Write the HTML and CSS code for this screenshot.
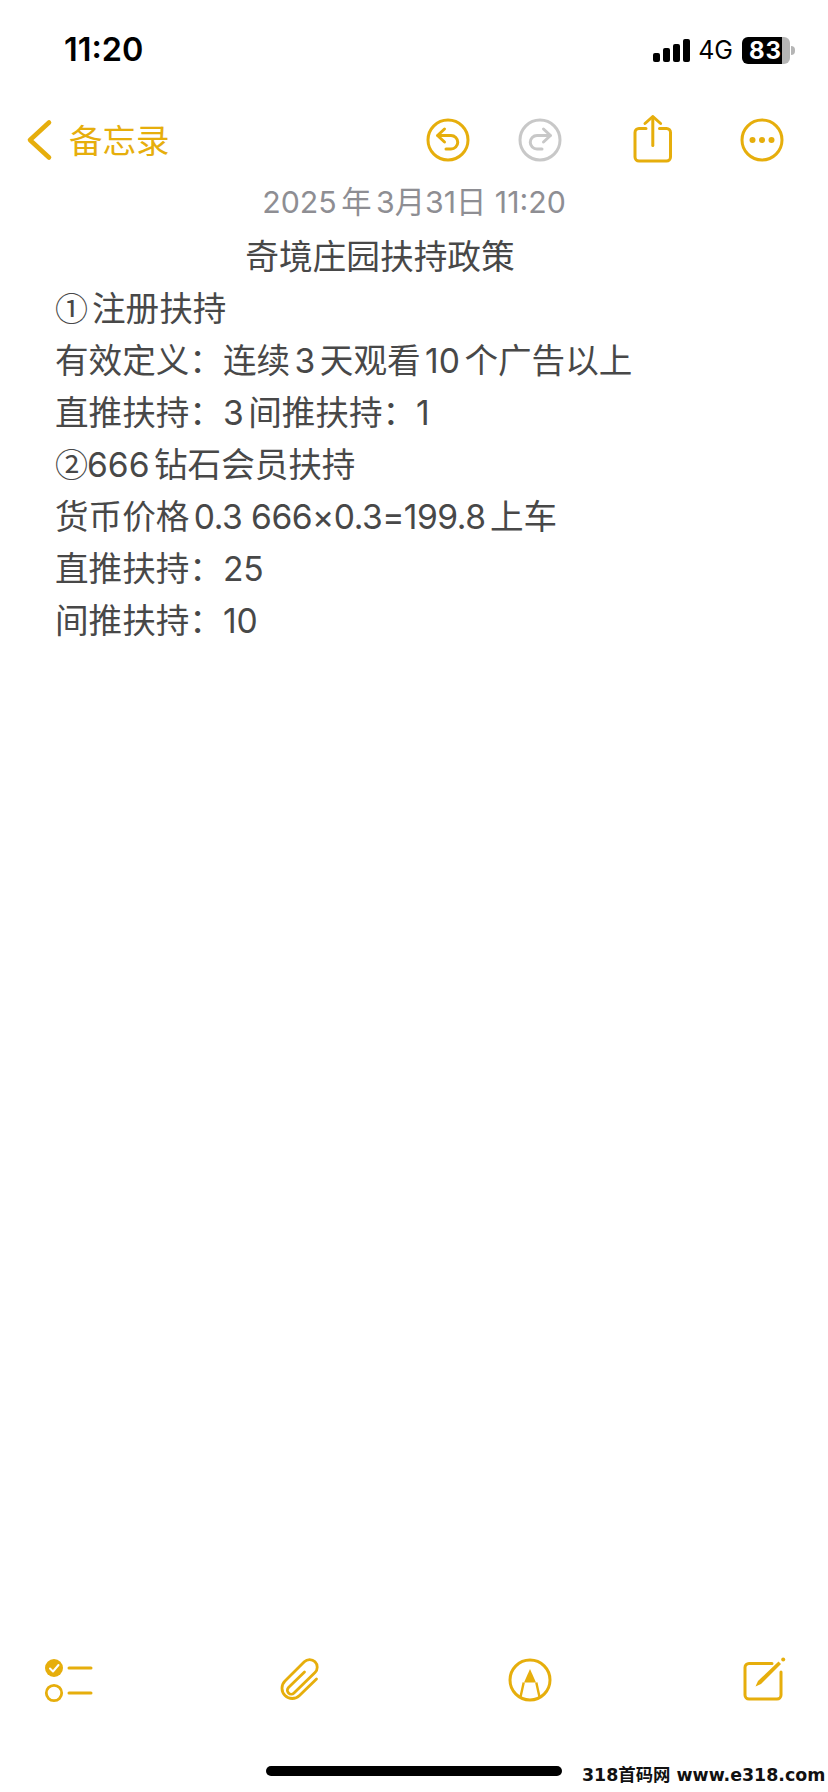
FILE: index.html
```html
<!DOCTYPE html>
<html lang="zh-CN">
<head>
<meta charset="utf-8">
<title>备忘录</title>
<link rel="stylesheet" href="styles.css">
</head>
<body>
<div class="page">
  <header class="status">
    <span class="time">11:20</span>
    <div class="status-right">
      <div class="signal"><i class="b1"></i><i class="b2"></i><i class="b3"></i><i class="b4"></i></div>
      <span class="net">4G</span>
      <div class="battery"><span class="level">83</span></div>
      <span class="nub"></span>
    </div>
  </header>

  <nav class="nav">
    <svg class="back" width="28" height="44" viewBox="0 0 28 44"><path d="M23 4.500 4 22l19 17.500" fill="none" stroke="#E6AE0C" stroke-width="4.600" stroke-linecap="round" stroke-linejoin="round"/></svg>
    <span class="back-label">备忘录</span>
    <svg class="ic undo" width="44" height="44" viewBox="0 0 44 44"><g fill="none" stroke="#E6AE0C" stroke-width="3" stroke-linecap="round" stroke-linejoin="round"><circle cx="22" cy="22" r="20"/><path d="M18.500 11 11.500 17.500l7 6.500"/><path d="M12 17.500H25a6.700 6.700 0 0 1 0 13.500H20"/></g></svg>
    <svg class="ic redo" width="44" height="44" viewBox="0 0 44 44"><g fill="none" stroke="#C8C8C8" stroke-width="3" stroke-linecap="round" stroke-linejoin="round"><circle cx="22" cy="22" r="20"/><path d="M25.500 11 32.500 17.500l-7 6.500"/><path d="M32 17.500H19a6.700 6.700 0 0 0 0 13.500H24"/></g></svg>
    <svg class="ic share" width="40" height="50" viewBox="0 0 40 50"><g fill="none" stroke="#E6AE0C" stroke-width="3" stroke-linecap="round" stroke-linejoin="round"><path d="M13 14.500H6a4 4 0 0 0-4 4V43a4 4 0 0 0 4 4H33.500a4 4 0 0 0 4-4V18.500a4 4 0 0 0-4-4H26.500"/><path d="M19.800 31.500V3"/><path d="M12 9.500 19.800 2.500l7.800 7"/></g></svg>
    <svg class="ic more" width="44" height="44" viewBox="0 0 44 44"><circle cx="22" cy="22" r="20" fill="none" stroke="#E6AE0C" stroke-width="3"/><circle cx="12.500" cy="22" r="3" fill="#E6AE0C"/><circle cx="22" cy="22" r="3" fill="#E6AE0C"/><circle cx="31.500" cy="22" r="3" fill="#E6AE0C"/></svg>
  </nav>

  <main class="note">
    <p class="date">2025<span class="sp"></span>年<span class="sp"></span>3月31日 11:20</p>
    <h1 class="title">奇境庄园扶持政策</h1>
    <p class="line"><span class="circ c1">①</span>注册扶持</p>
    <p class="line">有效定义：连续<span class="sp"></span>3<span class="sp"></span>天观看<span class="sp"></span>10<span class="sp"></span>个广告以上</p>
    <p class="line">直推扶持：3<span class="sp"></span>间推扶持：1</p>
    <p class="line"><span class="circ">②</span>666<span class="sp"></span>钻石会员扶持</p>
    <p class="line">货币价格<span class="sp"></span><span class="tight">0.3 666×0.3=199.8</span><span class="sp"></span>上车</p>
    <p class="line">直推扶持：25</p>
    <p class="line">间推扶持：10</p>
  </main>

  <footer class="toolbar">
    <svg class="tool checklist" width="50" height="46" viewBox="0 0 50 46"><circle cx="10" cy="11" r="9" fill="#E6AE0C"/><path d="M6 11.500l3 3 5.500-6.500" fill="none" stroke="#fff" stroke-width="2" stroke-linecap="round" stroke-linejoin="round"/><circle cx="10" cy="36" r="7.700" fill="none" stroke="#E6AE0C" stroke-width="2.800"/><path d="M25 11h22M25 36h22" stroke="#E6AE0C" stroke-width="3" stroke-linecap="round"/></svg>
    <svg class="tool clip" width="44" height="48" viewBox="0 0 44 48"><path d="M26.500 16 10.500 31.500a3.800 3.800 0 0 0 5.500 5.500L37 16.500a7.500 7.500 0 0 0-10.700-10.700L7 25a10.200 10.200 0 0 0 14.500 14.500L38.500 23" fill="none" stroke="#E6AE0C" stroke-width="2.800" stroke-linecap="round" stroke-linejoin="round"/></svg>
    <svg class="tool markup" width="44" height="44" viewBox="0 0 44 44"><circle cx="22" cy="22" r="20" fill="none" stroke="#E6AE0C" stroke-width="3"/><path d="M22 11 28 24.500H16Z" fill="#E6AE0C"/><path d="M15.700 24.500 12.500 39M28.300 24.500 31.500 39" fill="none" stroke="#E6AE0C" stroke-width="2.400"/></svg>
    <svg class="tool compose" width="44" height="46" viewBox="0 0 44 46"><path d="M30 6.500H7a4 4 0 0 0-4 4V38a4 4 0 0 0 4 4H35a4 4 0 0 0 4-4V15" fill="none" stroke="#E6AE0C" stroke-width="3" stroke-linecap="round"/><path d="M13.500 29.500 16 24 36.500 4.500 39 7 19 27Z" fill="#E6AE0C"/><circle cx="41.200" cy="2.500" r="2" fill="#E6AE0C"/></svg>
  </footer>

  <div class="home"><span class="indicator"></span></div>
  <span class="watermark">318首码网 www.e318.com</span>
</div>
</body>
</html>
```

FILE: styles.css
```css
* { box-sizing: border-box; }
html, body { margin: 0; padding: 0; background: #fff; }
.page {
  position: relative;
  width: 828px;
  height: 1792px;
  display: flex;
  flex-direction: column;
  overflow: hidden;
  font-family: Inter, "Noto Sans CJK SC", sans-serif;
}
.status {
  height: 95px;
  padding: 30px 0 0 64px;
  display: flex;
  align-items: flex-start;
  justify-content: space-between;
}
.time {
  font-size: 32.400px;
  font-weight: 600;
  line-height: 40px;
  color: #000;
}
.status-right {
  display: flex;
  align-items: center;
  height: 40px;
  margin-right: 33px;
}
.signal { display: flex; align-items: flex-end; gap: 3px; height: 23px; margin-top: 1px; }
.signal i { display: block; width: 7px; background: #000; border-radius: 2px; }
.b1 { height: 9px; }
.b2 { height: 14px; }
.b3 { height: 18px; }
.b4 { height: 23px; }
.net { font-size: 25px; color: #000; margin-left: 8px; line-height: 40px; }
.battery {
  width: 48px;
  height: 27px;
  margin-left: 9px;
  border-radius: 6px;
  background: linear-gradient(90deg, #000 83%, #b5b5b5 83%);
  overflow: hidden;
}
.level {
  display: block;
  font-size: 24px;
  font-weight: 700;
  line-height: 27px;
  letter-spacing: 1px;
  color: #fff;
  padding-left: 7px;
}
.nub {
  width: 4px;
  height: 9px;
  margin-left: 1px;
  background: #b5b5b5;
  border-radius: 0 4px 4px 0;
}
.nav {
  height: 90px;
  display: flex;
  align-items: center;
  padding-left: 26px;
}
.back-label {
  font-family: "Noto Sans CJK SC", sans-serif;
  font-size: 33.500px;
  line-height: 44px;
  color: #E6AE0C;
  margin: -2px 0 0 15px;
}
.ic { flex: none; }
.undo { margin-left: 256px; }
.redo { margin-left: 48px; }
.share { margin-left: 71px; margin-top: -2px; }
.more { margin-left: 67px; }
.note { flex: 1; padding: 0 55px; color: #484848; }
.date {
  margin: 0 0 0 -55px;
  height: 34px;
  line-height: 34px;
  text-align: center;
  font-size: 30.300px;
  color: #8e8e93;
  width: 828px;
}
.title {
  margin: 12px 0 0 -55px;
  font-size: 33.700px;
  font-weight: 400;
  line-height: 52px;
  text-align: center;
  width: 760px;
}
.line { margin: 0; height: 52px; font-size: 33.600px; line-height: 52px; }
.circ {
  display: inline-block;
  font-family: "Noto Sans CJK SC", sans-serif;
  width: 32px;
  font-size: 33px;
  line-height: 40px;
}
.c1 { width: 37px; }
.tight { letter-spacing: -0.500px; }
.sp { display: inline-block; width: 4.500px; }
.toolbar {
  height: 60px;
  display: flex;
  align-items: center;
  padding-left: 44px;
}
.clip { margin-left: 184px; }
.markup { margin-left: 186px; }
.compose { margin-left: 190px; margin-top: -1px; }
.tool { flex: none; }
.home { height: 82px; padding: 56px 0 0 266px; }
.indicator { display: block; width: 296px; height: 10px; background: #000; border-radius: 5px; }
.watermark {
  position: absolute;
  left: 582px;
  top: 1760px;
  font-family: "DejaVu Sans", "Noto Sans CJK SC", sans-serif;
  font-weight: 700;
  font-size: 17.400px;
  line-height: 30px;
  color: #111;
  white-space: nowrap;
}
```
